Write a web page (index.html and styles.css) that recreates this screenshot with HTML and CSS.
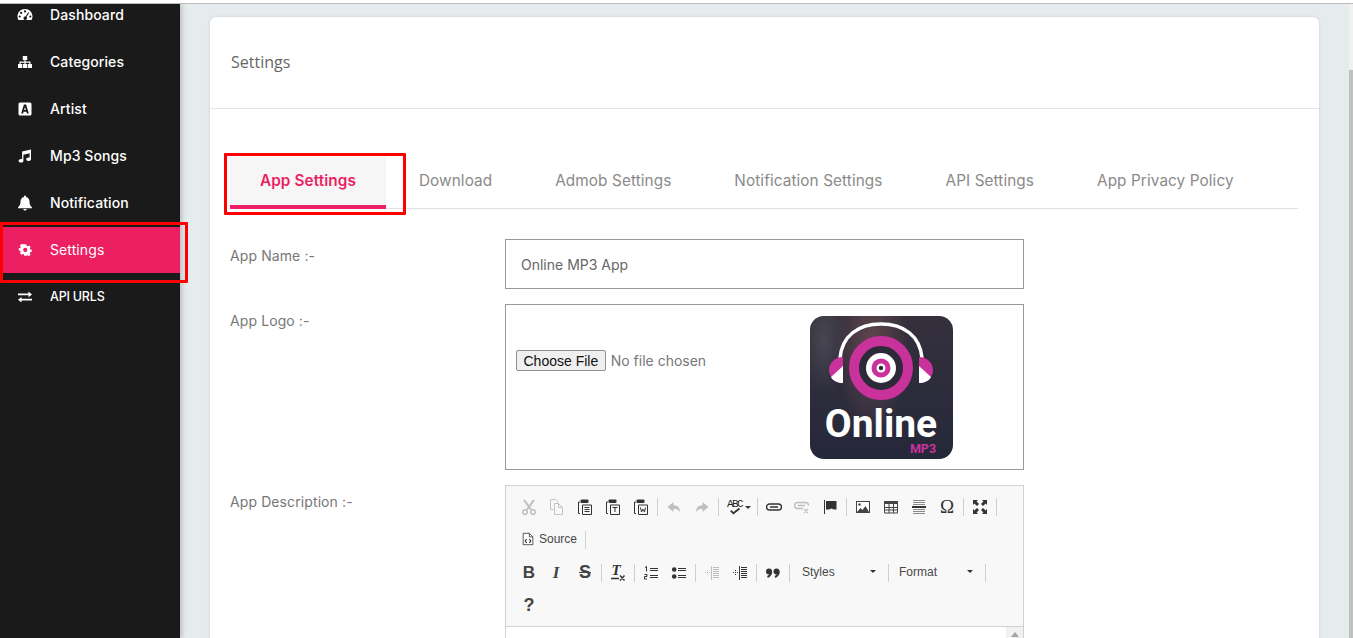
FILE: index.html
```html
<!DOCTYPE html>
<html lang="en">
<head>
<meta charset="utf-8">
<title>Settings</title>
<link rel="stylesheet" href="styles.css">
</head>
<body>
<div class="topline"></div>
<div class="shell">
  <aside class="sidebar">
    <nav class="nav">
      <a class="nav-item"><svg class="nav-icon" viewBox="0 0 16 16"><path fill="#fff" fill-rule="evenodd" d="M8 2C3.6 2 .5 5.400.5 9.600c0 1.300.3 2.400.9 3.400h13.200c.6-1 .9-2.100.9-3.400C15.500 5.400 12.400 2 8 2zM8 3.300a1.100 1.100 0 1 1 0 2.200 1.100 1.100 0 0 1 0-2.200zM4.200 4.800a1.100 1.100 0 1 1 0 2.200 1.100 1.100 0 0 1 0-2.200zM2.700 8.400a1.100 1.100 0 1 1 0 2.200 1.100 1.100 0 0 1 0-2.200zM13.300 8.400a1.100 1.100 0 1 1 0 2.200 1.100 1.100 0 0 1 0-2.200zM11.300 5.200l.9.6-2.700 4.300a1.700 1.700 0 1 1-1-.6z"/></svg><span>Dashboard</span></a>
      <a class="nav-item"><svg class="nav-icon" viewBox="0 0 16 16"><path fill="#fff" d="M5.800 2h4.400v4H8.600v1.600h4.900V10H15v4h-4.200v-4h1.500V8.800H8.600V10h1.500v4H5.900v-4h1.500V8.800H3.700V10h1.500v4H1v-4h1.500V7.600h4.900V6H5.800z"/></svg><span>Categories</span></a>
      <a class="nav-item"><svg class="nav-icon" viewBox="0 0 16 16"><path fill="#fff" fill-rule="evenodd" d="M3 1.500h10A1.500 1.500 0 0 1 14.500 3v10a1.500 1.500 0 0 1-1.500 1.500H3A1.500 1.500 0 0 1 1.500 13V3A1.500 1.500 0 0 1 3 1.500zM6.900 3.500 4.200 12.500h1.900l.5-1.800h2.800l.5 1.800h1.900L9.100 3.500zM8 5.900l.9 3.100H7.100z"/></svg><span>Artist</span></a>
      <a class="nav-item"><svg class="nav-icon" viewBox="0 0 16 16"><path fill="#fff" fill-rule="evenodd" d="M14 1.500v9.700c0 1.200-1.300 1.800-2.500 1.800S9.200 12.400 9.200 11.300s1.200-1.800 2.300-1.800c.4 0 .8.100 1.100.2V5.300L6.400 6.800v6.100c0 1.200-1.300 1.700-2.400 1.700s-2.400-.6-2.400-1.700 1.300-1.800 2.400-1.800c.4 0 .8.100 1.100.2V3.500z"/></svg><span>Mp3 Songs</span></a>
      <a class="nav-item"><svg class="nav-icon" viewBox="0 0 16 16"><path fill="#fff" d="M8 .5a1 1 0 0 1 1 1V2c2.300.5 3.500 2.400 3.500 4.700 0 3 1 4 2.500 5.800v.8H1v-.8c1.500-1.800 2.500-2.800 2.500-5.800C3.500 4.400 4.700 2.500 7 2v-.5a1 1 0 0 1 1-1zM6.200 14h3.600A1.800 1.800 0 0 1 8 15.500 1.800 1.800 0 0 1 6.200 14z"/></svg><span>Notification</span></a>
      <a class="nav-item is-active"><svg class="nav-icon" viewBox="-1 -1 18 18"><path fill="#fff" fill-rule="evenodd" d="M6.800 2h2.400l.4 1.700 1.200.5 1.500-.9 1.700 1.700-.9 1.500.5 1.200 1.700.4v2.400l-1.700.4-.5 1.200.9 1.500-1.700 1.700-1.500-.9-1.200.5L9.200 15H6.800l-.4-1.700-1.200-.5-1.500.9L2 12l.9-1.500-.5-1.200L.7 8.900V6.500l1.700-.4.5-1.200L2 3.400 3.700 1.700zM8 6a2.400 2.400 0 1 0 0 4.800A2.400 2.400 0 0 0 8 6z" transform="translate(.3 -.4)"/></svg><span>Settings</span></a>
      <a class="nav-item"><svg class="nav-icon" viewBox="0 0 16 16"><path fill="#fff" d="M1 4.500h10.500V2.600L15 5.400l-3.500 2.800V6.300H1zM15 9.800H4.500V7.900L1 10.700l3.500 2.800v-1.900H15z"/></svg><span class="nav-caps">API URLS</span></a>
    </nav>
  </aside>
  <main class="main">
    <section class="card">
      <header class="card-head">Settings</header>
      <div class="card-body">
        <div class="tabs">
          <a class="tab is-active">App Settings</a>
          <a class="tab">Download</a>
          <a class="tab">Admob Settings</a>
          <a class="tab">Notification Settings</a>
          <a class="tab">API Settings</a>
          <a class="tab">App Privacy Policy</a>
        </div>
        <div class="form">
          <label class="form-label">App Name :-</label>
          <input class="text-input" type="text" value="Online MP3 App">
          <label class="form-label">App Logo :-</label>
          <div class="logo-box">
            <input class="file-input" type="file">
            <svg class="logo" viewBox="0 0 143 143">
              <defs>
                <linearGradient id="bg" x1="0" y1="0" x2="0" y2="1"><stop offset="0" stop-color="#35303c"/><stop offset="1" stop-color="#25283a"/></linearGradient>
                <radialGradient id="glow" cx=".5" cy=".5" r=".5"><stop offset="0" stop-color="#6a4a50" stop-opacity=".85"/><stop offset="1" stop-color="#6a4a50" stop-opacity="0"/></radialGradient>
                <radialGradient id="glow2" cx=".5" cy=".5" r=".5"><stop offset="0" stop-color="#55555f" stop-opacity=".6"/><stop offset="1" stop-color="#55555f" stop-opacity="0"/></radialGradient>
                <clipPath id="logoclip"><rect width="143" height="143" rx="14"/></clipPath>
              </defs>
              <g clip-path="url(#logoclip)">
                <rect width="143" height="143" fill="url(#bg)"/>
                <ellipse cx="62" cy="30" rx="36" ry="90" fill="url(#glow)"/>
                <ellipse cx="14" cy="24" rx="24" ry="56" fill="url(#glow2)"/>
                <path d="M30 42C32 20 48 8 71 8s39 12 41 34" fill="none" stroke="#fff" stroke-width="3.500"/>
                <path d="M33 41C25 41 19 47 19 54s6 13 14 13z" fill="#c8329a"/>
                <path d="M33 50 21 61c2 4 7 6 12 6z" fill="#fff"/>
                <path d="M109 41c8 0 14 6 14 13s-6 13-14 13z" fill="#c8329a"/>
                <path d="M109 50l12 11c-2 4-7 6-12 6z" fill="#fff"/>
                <circle cx="71" cy="52" r="27" fill="#2c2a38" stroke="#c8329a" stroke-width="10"/>
                <circle cx="71" cy="52" r="15" fill="#fff"/>
                <circle cx="71" cy="52" r="9.500" fill="#c8329a"/>
                <circle cx="71" cy="52" r="4.500" fill="#fff"/>
                <circle cx="71" cy="52" r="2.200" fill="#2a2a38"/>
                <text class="logo-title" x="71" y="121" text-anchor="middle">Online</text>
                <text class="logo-sub" x="113" y="136.500" text-anchor="middle">MP3</text>
              </g>
            </svg>
          </div>
          <label class="form-label">App Description :-</label>
          <div class="editor">
            <div class="toolbar">
              <div class="tb-row">
                <a class="tb-btn is-off"><svg viewBox="0 0 16 16"><path fill="none" stroke="#555" stroke-width="2" d="M3 1l7 9.500M13 1 6 10.500"/><circle cx="4" cy="13" r="2.300" fill="none" stroke="#555" stroke-width="1.400"/><circle cx="12" cy="13" r="2.300" fill="none" stroke="#555" stroke-width="1.400"/></svg></a>
                <a class="tb-btn is-off"><svg viewBox="0 0 16 16"><path fill="none" stroke="#666" d="M1.500 .5h5l2 2v2M1.500 .5v10h3M5.500 4.500h4l4 4v7h-8zM9.500 4.500v4h4"/></svg></a>
                <a class="tb-btn"><svg viewBox="0 0 16 16"><path fill="none" stroke="#333" d="M3 3H1.500v11.500H3M5.500 15.500h9V6h-9zM7.500 8.500h5M7.500 10.500h5M7.500 12.500h5"/><rect x="3.500" y=".5" width="8" height="3.500" rx="1" fill="#333"/></svg></a>
                <a class="tb-btn"><svg viewBox="0 0 16 16"><path fill="none" stroke="#333" d="M3 3H1.500v11.500H3M5.500 15.500h9V6h-9zM7.500 8.500h5M10 8.500V13"/><rect x="3.500" y=".5" width="8" height="3.500" rx="1" fill="#333"/></svg></a>
                <a class="tb-btn"><svg viewBox="0 0 16 16"><path fill="none" stroke="#333" d="M3 3H1.500v11.500H3M5.500 15.500h9V6h-9zM7.500 8.500l1 4.500 1.500-3 1.500 3 1-4.500"/><rect x="3.500" y=".5" width="8" height="3.500" rx="1" fill="#333"/></svg></a>
                <i class="tb-sep"></i>
                <a class="tb-btn is-off"><svg viewBox="0 0 16 16"><path fill="#555" d="M7.500 3 1.500 8l6 5v-3.200c3 0 5 .7 6.500 3.200 0-4-2-6.500-6.500-6.700z"/></svg></a>
                <a class="tb-btn is-off"><svg viewBox="0 0 16 16"><path fill="#555" d="M8.500 3l6 5-6 5V9.800c-3 0-5 .7-6.500 3.200 0-4 2-6.500 6.500-6.700z"/></svg></a>
                <i class="tb-sep"></i>
                <a class="tb-btn tb-spell"><span class="abc">ABC</span><svg class="check" viewBox="0 0 16 8"><path fill="none" stroke="#333" stroke-width="2" d="M2 3l3 3 7-5.500"/></svg><b class="caret"></b></a>
                <i class="tb-sep"></i>
                <a class="tb-btn"><svg viewBox="0 0 16 16"><path fill="none" stroke="#333" stroke-width="1.400" d="M6 5H3.500a3 3 0 0 0 0 6H12.500a3 3 0 0 0 0-6H6M4 8h8"/></svg></a>
                <a class="tb-btn is-off"><svg viewBox="0 0 16 16"><path fill="none" stroke="#555" stroke-width="1.400" d="M6 3.500H3.500a3 3 0 0 0 0 6H9M12 3.500h-6M12 3.500a3 3 0 0 1 2.500 3M4 6.500h7M10 10l4 4M14 10l-4 4"/></svg></a>
                <a class="tb-btn"><svg viewBox="0 0 16 16"><path fill="#333" d="M2 1h1v14H2zM4 2h10.500v8.500H12L9.500 9.500 7 10.500H4z"/></svg></a>
                <i class="tb-sep"></i>
                <a class="tb-btn"><svg viewBox="0 0 16 16"><rect x="1.500" y="2.500" width="13" height="11" fill="#fff" stroke="#444"/><circle cx="4.500" cy="5.500" r="1.200" fill="#444"/><path fill="#444" d="M2 13l3.500-4 2 2 3-4 3.500 6z"/></svg></a>
                <a class="tb-btn"><svg viewBox="0 0 16 16"><path fill="#444" d="M1 2h14v3H1z"/><path fill="none" stroke="#444" d="M1.500 5v9h13V5M1.500 8.500h13M1.500 11h13M6 5v9M10.500 5v9"/></svg></a>
                <a class="tb-btn"><svg viewBox="0 0 16 16"><path fill="none" stroke="#888" d="M2 1.500h12M2 3.500h12M2 5.500h12M2 10.500h12M2 12.500h12M2 14.500h12"/><path fill="#333" d="M1 7h14v2H1z"/></svg></a>
                <a class="tb-btn tb-glyph tb-omega">Ω</a>
                <i class="tb-sep"></i>
                <a class="tb-btn"><svg viewBox="0 0 16 16"><path fill="#333" d="M1 1h5L4.600 2.400 7 5 5 7 2.400 4.600 1 6zM15 1v5l-1.400-1.400L11 7 9 5l2.400-2.400L10 1zM1 15v-5l1.400 1.400L5 9l2 2-2.400 2.600L6 15zM15 15h-5l1.400-1.400L9 11l2-2 2.600 2.400L15 10z"/></svg></a>
                <i class="tb-sep"></i>
              </div>
              <div class="tb-row">
                <a class="tb-btn tb-source"><svg viewBox="0 0 16 16"><path fill="#fff" stroke="#444" d="M2.500 1.500h7l4 4v9h-11zM9.500 1.500v4h4"/><path fill="none" stroke="#333" stroke-width="1.300" d="M6.500 8 4.800 10.300l1.700 2.200M9.500 8l1.700 2.300-1.700 2.200"/></svg><span>Source</span></a>
                <i class="tb-sep"></i>
              </div>
              <div class="tb-row">
                <a class="tb-btn tb-glyph tb-bold">B</a>
                <a class="tb-btn tb-glyph tb-italic">I</a>
                <a class="tb-btn tb-glyph tb-strike">S</a>
                <i class="tb-sep"></i>
                <a class="tb-btn tb-clear"><span>T</span><svg viewBox="0 0 16 16"><path fill="none" stroke="#333" stroke-width="1.400" d="M1 13.500h8M10 10.500l4.500 5M14.500 10.500l-4.500 5"/></svg></a>
                <i class="tb-sep"></i>
                <a class="tb-btn"><svg viewBox="0 0 16 16"><path fill="none" stroke="#333" d="M7 3.500h8M7 5.500h8M7 10.500h8M7 12.500h8"/><path fill="none" stroke="#333" d="M2 2.500l1.500-1v5M1.500 9.500h2.500v2H1.500v2.500H4"/></svg></a>
                <a class="tb-btn"><svg viewBox="0 0 16 16"><path fill="none" stroke="#333" d="M7 3.500h8M7 5.500h8M7 10.500h8M7 12.500h8"/><circle cx="3.200" cy="4.500" r="2.300" fill="#333"/><circle cx="3.200" cy="11.500" r="2.300" fill="#333"/></svg></a>
                <i class="tb-sep"></i>
                <a class="tb-btn is-off"><svg viewBox="0 0 16 16"><path fill="none" stroke="#555" d="M7.500 1v14M9 2.500h6M9 4.500h6M9 6.500h6M9 8.500h6M9 10.500h6M9 12.500h6" /><path fill="none" stroke="#555" stroke-dasharray="1 1" d="M1 7.500h5M3.500 5v5"/></svg></a>
                <a class="tb-btn"><svg viewBox="0 0 16 16"><path fill="none" stroke="#333" d="M7.500 1v14M9 2.500h6M9 4.500h6M9 6.500h6M9 8.500h6M9 10.500h6M9 12.500h6"/><path fill="none" stroke="#333" stroke-dasharray="1 1" d="M1 7.500h5M3.500 5v5"/></svg></a>
                <i class="tb-sep"></i>
                <a class="tb-btn"><svg viewBox="0 0 16 16"><circle cx="4" cy="6.500" r="3" fill="#333"/><path fill="none" stroke="#333" stroke-width="2" d="M6.200 6.500c0 3-1.500 4.500-3.700 5.500"/><circle cx="11.500" cy="6.500" r="3" fill="#333"/><path fill="none" stroke="#333" stroke-width="2" d="M13.700 6.500c0 3-1.500 4.500-3.700 5.500"/></svg></a>
                <i class="tb-sep"></i>
                <a class="tb-combo tb-combo-styles"><span>Styles</span><b class="caret"></b></a>
                <i class="tb-sep"></i>
                <a class="tb-combo tb-combo-format"><span>Format</span><b class="caret"></b></a>
                <i class="tb-sep"></i>
              </div>
              <div class="tb-row">
                <a class="tb-btn tb-glyph tb-help">?</a>
              </div>
            </div>
            <div class="editor-area"><div class="editor-scroll"><b class="scroll-up"></b></div></div>
          </div>
        </div>
      </div>
    </section>
  </main>
  <div class="scrollbar"><div class="scrollbar-thumb"></div></div>
</div>
<div class="mark mark-nav"></div>
<div class="mark mark-tab"></div>
</body>
</html>
```
FILE: styles.css
```css
* { box-sizing: border-box; }
html, body { margin: 0; height: 100%; overflow: hidden; }
body {
  display: flex;
  flex-direction: column;
  background: #e6ebee;
  font-family: Inter, "Open Sans", sans-serif;
  color: #666;
}
a { display: block; }

.topline { height: 4px; flex: none; background: #fff; border-bottom: 1px solid #bbb; }
.shell { flex: 1; min-height: 0; display: flex; overflow: hidden; }

.sidebar {
  width: 180px;
  flex: none;
  background: #1a1a1a;
  box-shadow: 2px 0 5px rgba(0, 0, 0, .2);
  position: relative;
  overflow: hidden;
}
.nav { margin-top: -12px; display: flex; flex-direction: column; gap: 1px; }
.nav-item {
  height: 46px;
  display: flex;
  align-items: center;
  gap: 17px;
  padding-left: 17px;
  color: #fff;
  font-size: 14px;
  font-weight: 500;
  letter-spacing: .1px;
}
.nav-item span { margin-top: -2px; }
.nav-item.is-active { background: #ec1f63; font-weight: 400; }
.nav-icon { width: 16px; height: 16px; flex: none; }
.nav-caps { font-size: 12.500px; letter-spacing: -.2px; }

.main { flex: 1; min-width: 0; padding: 13px 30px 0; overflow: hidden; }
.card { background: #fff; border-radius: 6px; box-shadow: 0 0 3px rgba(120, 140, 150, .3); }
.card-head {
  height: 92px;
  display: flex;
  align-items: center;
  padding: 0 0 2px 21px;
  border-bottom: 1px solid #e3e6e8;
  font-family: "Open Sans", sans-serif;
  font-size: 16px;
  color: #666;
}
.card-body { padding: 48px 21px 20px 20px; }

.tabs { display: flex; height: 52px; border-bottom: 1px solid #dee2e6; }
.tab {
  padding: 0 30px;
  margin-right: 3px;
  height: 52px;
  line-height: 48px;
  font-size: 15.300px;
  letter-spacing: .1px;
  color: #8a8a8a;
}
.tab.is-active {
  background: #f6f6f6;
  color: #ec1f63;
  font-weight: 600;
  border-bottom: 4px solid #ec1f63;
}

.form {
  margin-top: 30px;
  display: grid;
  grid-template-columns: 275px 519px;
  row-gap: 15px;
}
.form-label { font-size: 14px; letter-spacing: .1px; color: #777; padding-top: 8px; line-height: 18px; }
.text-input {
  height: 50px;
  width: 100%;
  border: 1px solid #999;
  padding: 0 15px;
  font-family: inherit;
  font-size: 14px;
  color: #666;
  background: #fff;
  outline: 0;
}
.logo-box {
  height: 166px;
  border: 1px solid #999;
  display: flex;
  align-items: flex-start;
  padding: 11px 0 0 10px;
}
.file-input {
  width: 294px;
  margin-top: 34px;
  font-family: inherit;
  font-size: 14px;
  color: #777;
}
.file-input::file-selector-button {
  font-family: "Liberation Sans", sans-serif;
  font-size: 14px;
  color: #111;
  height: 21px;
  padding: 0 6.500px;
  margin-right: 5px;
  background: #efefef;
  border: 1px solid #8f8f8f;
  border-radius: 2px;
}
.logo { width: 143px; height: 143px; flex: none; }
.logo-title { font: 700 39px Roboto, sans-serif; fill: #fff; }
.logo-sub { font: 700 12.500px Roboto, sans-serif; fill: #c8329a; }

.editor { border: 1px solid #d1d1d1; height: 300px; background: #fff; }
.toolbar { background: #f8f8f8; border-bottom: 1px solid #d1d1d1; padding: 4px 9px; }
.tb-row { height: 33px; display: flex; align-items: center; }
.tb-btn {
  width: 28px;
  height: 28px;
  flex: none;
  display: flex;
  align-items: center;
  justify-content: center;
  position: relative;
}
.tb-btn svg { width: 16px; height: 16px; }
.tb-btn.is-off { opacity: .35; }
.tb-sep { width: 1px; height: 18px; margin: 0 2px; background: #cfcfcf; flex: none; }
.caret {
  display: block;
  width: 0; height: 0;
  border: 3px solid transparent;
  border-top-color: #333;
  border-bottom: 0;
}
.tb-spell { width: 34px; display: block; }
.abc {
  position: absolute;
  left: 6px; top: 6px;
  font: 11px/11px "Liberation Mono", monospace;
  letter-spacing: -1.600px;
  color: #222;
}
.tb-spell svg.check { position: absolute; left: 8px; top: 15px; width: 14px; height: 7px; }
.tb-spell .caret { position: absolute; left: 24px; top: 13px; }
.tb-glyph { color: #444; font-family: "Liberation Sans", sans-serif; }
.tb-bold { font-size: 17px; font-weight: 700; }
.tb-italic { font: italic 700 17px "Liberation Serif", serif; margin-left: -1px; margin-right: 1px; }
.tb-strike { font-size: 18px; font-weight: 700; text-decoration: line-through; }
.tb-help { font-size: 18px; font-weight: 700; }
.tb-omega { font: 19px "Liberation Serif", serif; color: #333; }
.tb-clear span { font: italic 700 15px "Liberation Serif", serif; color: #333; margin: -4px 4px 0 0; }
.tb-clear svg { position: absolute; left: 6px; top: 6px; }
.tb-source {
  width: 68px;
  justify-content: flex-start;
  padding: 0 0 2px 6px;
  gap: 4px;
  font: 12px "Liberation Sans", sans-serif;
  color: #474747;
}
.tb-source svg { width: 14px; height: 14px; }
.tb-combo {
  height: 28px;
  flex: none;
  display: flex;
  align-items: center;
  justify-content: space-between;
  padding: 0 10px 2px;
  font: 12px "Liberation Sans", sans-serif;
  color: #484848;
}
.tb-combo-styles { width: 94px; }
.tb-combo-format { width: 92px; padding-left: 8px; }
.editor-area { display: flex; justify-content: flex-end; height: 160px; }
.editor-scroll { width: 17px; background: #f1f1f1; display: flex; justify-content: center; padding-top: 5px; }
.scroll-up { width: 0; height: 0; border: 4px solid transparent; border-bottom: 5px solid #a3a3a3; border-top: 0; }

.scrollbar { width: 4px; flex: none; background: #f1f1f1; padding-top: 66px; }
.scrollbar-thumb { height: 100%; background: #c1c1c1; }

.mark { position: absolute; border: 3px solid #fe0000; border-radius: 1px; pointer-events: none; }
.mark-nav { left: 0; top: 222px; width: 188px; height: 61px; }
.mark-tab { left: 224px; top: 153px; width: 182px; height: 62px; }
```
